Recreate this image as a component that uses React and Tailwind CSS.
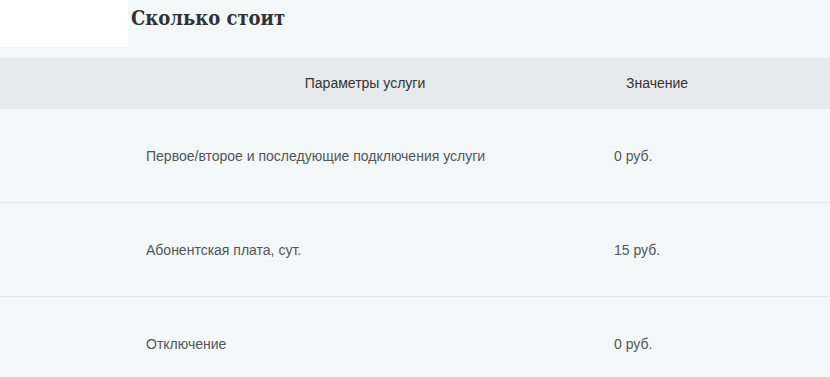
import React from "react";

const rows = [
  { name: "Первое/второе и последующие подключения услуги", value: "0 руб." },
  { name: "Абонентская плата, сут.", value: "15 руб." },
  { name: "Отключение", value: "0 руб." },
];

const App = () => {
  return (
    <div
      className="min-h-[377px] w-[830px] bg-[#f4f7f7] overflow-hidden"
      style={{ fontFamily: '"Liberation Sans", Arial, sans-serif' }}
    >
      <div className="flex h-[58px]">
        <div className="w-[128px] h-[47px] bg-white" />
        <h2
          className="pl-[3px] pt-[5px] text-[20px] leading-[26px] font-bold font-stretch-condensed text-[#2f3336]"
          style={{ fontFamily: '"DejaVu Serif", "Liberation Serif", serif' }}
        >
          Сколько стоит
        </h2>
      </div>
      <div className="flex h-[51px] items-center bg-[#e8e9eb] text-[14px] text-[#333]">
        <div className="w-[600px] pl-[130px] text-center">Параметры услуги</div>
        <div className="pl-[26px]">Значение</div>
      </div>
      {rows.map((row) => (
        <div
          key={row.name}
          className="flex h-[94px] items-center border-b border-[#e6e8e8] pt-[2px] text-[14px] text-[#51565a]"
        >
          <div className="w-[614px] pl-[146px]">{row.name}</div>
          <div>{row.value}</div>
        </div>
      ))}
    </div>
  );
};

export default App;
